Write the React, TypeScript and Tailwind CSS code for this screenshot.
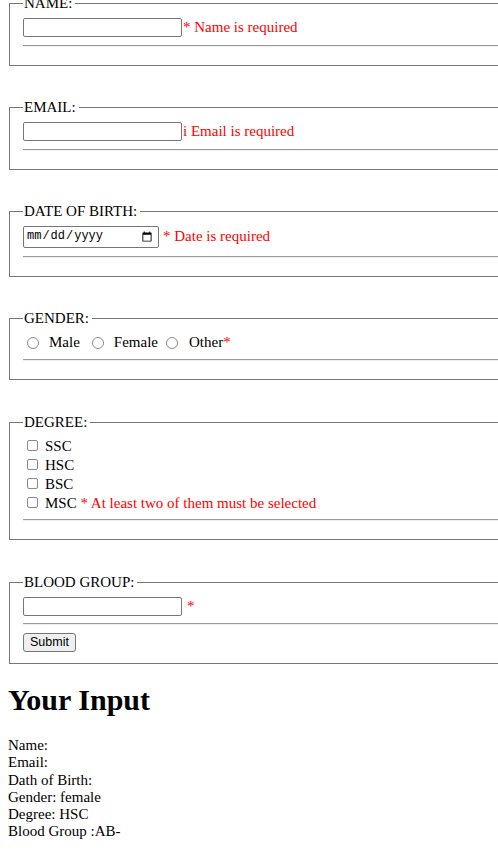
import React from "react";

const Hr = () => (
  <hr className="h-0 border-t border-b border-t-[#9a9a9a] border-b-[#eeeeee]" />
);

const TextInput = () => (
  <input
    type="text"
    className="w-[159px] h-[19px] border border-[#767676] rounded-[2px] bg-white px-[2px] text-[12px] font-['Liberation_Sans',sans-serif] outline-none"
  />
);

const Radio = ({ cls }: { cls: string }) => (
  <input
    type="radio"
    name="gender"
    className={"appearance-none w-[12px] h-[12px] rounded-full border border-[#8a8a8a] bg-white shrink-0 " + cls}
  />
);

const Check = () => (
  <input
    type="checkbox"
    className="appearance-none w-[11px] h-[11px] rounded-[2px] border border-[#8a8a8a] bg-white shrink-0 ml-[4px] mb-[3px]"
  />
);

const fs = "ml-[9px] w-[540px] border border-[#767676] pl-[13px] pr-[13px]";
const lg = "pl-[1px] pr-[3px] leading-[17px]";

export default function App() {
  return (
    <div className="w-[498px] min-h-[859px] overflow-hidden bg-white text-black font-['Liberation_Serif',serif] text-[15px] leading-[17.25px]">
      {/* NAME */}
      <fieldset className={fs + " mt-[-5px] pt-[6px] pb-[18px]"}>
        <legend className={lg}>NAME:</legend>
        <div className="flex items-center h-[19px]">
          <TextInput />
          <span className="ml-[1px] text-[#ff0000]">* Name is required</span>
        </div>
        <div className="mt-[8px]">
          <Hr />
        </div>
      </fieldset>

      {/* EMAIL */}
      <fieldset className={fs + " mt-[33px] pt-[6px] pb-[18px]"}>
        <legend className={lg}>EMAIL:</legend>
        <div className="flex items-center h-[19px]">
          <TextInput />
          <span className="ml-[1px] text-[#ff0000]">i Email is required</span>
        </div>
        <div className="mt-[8px]">
          <Hr />
        </div>
      </fieldset>

      {/* DATE OF BIRTH */}
      <fieldset className={fs + " mt-[33px] pt-[6px] pb-[18px]"}>
        <legend className={lg}>DATE OF BIRTH:</legend>
        <div className="flex items-center h-[22px]">
          <input
            type="date"
            className="w-[136px] h-[22px] border border-[#767676] rounded-[2px] bg-white pl-[2px] pr-[3px] text-[12px] font-['Liberation_Mono',monospace] outline-none"
          />
          <span className="ml-[4px] text-[#ff0000]">* Date is required</span>
        </div>
        <div className="mt-[8px]">
          <Hr />
        </div>
      </fieldset>

      {/* GENDER */}
      <fieldset className={fs + " mt-[33px] pt-[7px] pb-[18px]"}>
        <legend className={lg}>GENDER:</legend>
        <div className="flex items-center h-[18px]">
          <Radio cls="ml-[4px]" />
          <span className="ml-[10px]">Male</span>
          <Radio cls="ml-[12px]" />
          <span className="ml-[10px]">Female</span>
          <Radio cls="ml-[8px]" />
          <span className="ml-[11px]">
            Other<span className="text-[#ff0000]">*</span>
          </span>
        </div>
        <div className="mt-[7px]">
          <Hr />
        </div>
      </fieldset>

      {/* DEGREE */}
      <fieldset className={fs + " mt-[34px] pt-[6px] pb-[18px]"}>
        <legend className={lg}>DEGREE:</legend>
        <div className="flex flex-col">
          <div className="flex items-center h-[19px]">
            <Check />
            <span className="ml-[7px]">SSC</span>
          </div>
          <div className="flex items-center h-[19px]">
            <Check />
            <span className="ml-[7px]">HSC</span>
          </div>
          <div className="flex items-center h-[19px]">
            <Check />
            <span className="ml-[7px]">BSC</span>
          </div>
          <div className="flex items-center h-[19px]">
            <Check />
            <span className="ml-[7px]">
              MSC{" "}
              <span className="text-[#ff0000]">
                * At least two of them must be selected
              </span>
            </span>
          </div>
        </div>
        <div className="mt-[6px]">
          <Hr />
        </div>
      </fieldset>

      {/* BLOOD GROUP */}
      <fieldset className={fs + " mt-[34px] pt-[6px] pb-[11px]"}>
        <legend className={lg}>BLOOD GROUP:</legend>
        <div className="flex items-center h-[19px]">
          <TextInput />
          <span className="ml-[5px] text-[#ff0000]">*</span>
        </div>
        <div className="mt-[7px]">
          <Hr />
        </div>
        <div className="mt-[8px] flex">
          <button
            type="button"
            className="h-[19px] px-[6px] border border-[#767676] rounded-[3px] bg-[#efefef] text-black text-[12.5px] leading-[15px] font-['Liberation_Sans',sans-serif]"
          >
            Submit
          </button>
        </div>
      </fieldset>

      {/* OUTPUT */}
      <div className="pl-[8px]">
        <h1 className="mt-[19px] mb-[20px] text-[30px] leading-[34px] font-bold">
          Your Input
        </h1>
        <div>Name:</div>
        <div>Email:</div>
        <div>Dath of Birth:</div>
        <div>Gender: female</div>
        <div>Degree: HSC</div>
        <div>Blood Group :AB-</div>
      </div>
    </div>
  );
}
